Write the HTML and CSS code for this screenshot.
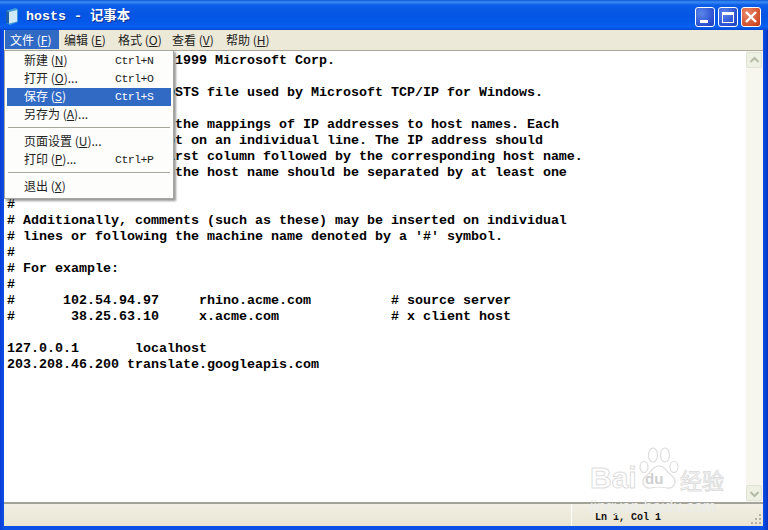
FILE: index.html
```html
<!DOCTYPE html>
<html lang="zh">
<head>
<meta charset="utf-8">
<title>hosts - 记事本</title>
<link rel="stylesheet" href="styles.css">
</head>
<body>
<div class="window">
  <header class="titlebar">
    <svg class="app-icon" width="13" height="17" viewBox="0 0 13 17">
      <path d="M0 3 L9 0 L12 1 L12 14 L4 17 L0 15 Z" fill="#3f9ad8"/>
      <path d="M3 4 L11 2 L11 13.5 L3 15.5 Z" fill="#cfe9f9"/>
      <path d="M0 3 L3 4 L3 15.5 L0 15 Z" fill="#1c5fa8"/>
    </svg>
    <span class="title">hosts - 记事本</span>
    <div class="controls">
      <button class="ctl ctl-blue"><svg width="20" height="20" viewBox="0 0 20 20"><rect x="5" y="13" width="8" height="3" fill="#fff"/></svg></button>
      <button class="ctl ctl-blue"><svg width="20" height="20" viewBox="0 0 20 20"><rect x="4.5" y="5.5" width="11" height="10" fill="none" stroke="#fff"/><rect x="4" y="5" width="12" height="3" fill="#fff"/></svg></button>
      <button class="ctl ctl-red"><svg width="20" height="20" viewBox="0 0 20 20"><path d="M5 5 L15 15 M15 5 L5 15" stroke="#fff" stroke-width="2.4"/></svg></button>
    </div>
  </header>
  <nav class="menubar">
    <span class="menu-item active">文件 (<u>F</u>)</span>
    <span class="menu-item">编辑 (<u>E</u>)</span>
    <span class="menu-item">格式 (<u>O</u>)</span>
    <span class="menu-item">查看 (<u>V</u>)</span>
    <span class="menu-item">帮助 (<u>H</u>)</span>
  </nav>
  <main class="editor">
    <pre class="text"># Copyright (c) 1993-1999 Microsoft Corp.
#
# This is a sample HOSTS file used by Microsoft TCP/IP for Windows.
#
# This file contains the mappings of IP addresses to host names. Each
# entry should be kept on an individual line. The IP address should
# be placed in the first column followed by the corresponding host name.
# The IP address and the host name should be separated by at least one
# space.
#
# Additionally, comments (such as these) may be inserted on individual
# lines or following the machine name denoted by a '#' symbol.
#
# For example:
#
#      102.54.94.97     rhino.acme.com          # source server
#       38.25.63.10     x.acme.com              # x client host

127.0.0.1       localhost
203.208.46.200 translate.googleapis.com</pre>
    <div class="scrollbar">
      <div class="sb-btn"><svg width="15" height="15" viewBox="0 0 15 15"><path d="M3.5 9 L7.5 5 L11.5 9" fill="none" stroke="#b4bca8" stroke-width="2"/></svg></div>
      <div class="sb-btn"><svg width="15" height="15" viewBox="0 0 15 15"><path d="M3.5 6 L7.5 10 L11.5 6" fill="none" stroke="#b4bca8" stroke-width="2"/></svg></div>
    </div>
  </main>
  <footer class="statusbar">
    <div class="status-main"></div>
    <div class="status-pos">Ln 1, Col 1</div>
    <svg class="grip" width="12" height="12" viewBox="0 0 12 12">
      <g fill="#b5b29f"><rect x="9" y="1" width="2" height="2"/><rect x="5" y="5" width="2" height="2"/><rect x="9" y="5" width="2" height="2"/><rect x="1" y="9" width="2" height="2"/><rect x="5" y="9" width="2" height="2"/><rect x="9" y="9" width="2" height="2"/></g>
    </svg>
  </footer>
</div>

<div class="dropdown">
  <div class="dd-row"><span class="dd-label">新建 (<u>N</u>)</span><span class="dd-key">Ctrl+N</span></div>
  <div class="dd-row"><span class="dd-label">打开 (<u>O</u>)...</span><span class="dd-key">Ctrl+O</span></div>
  <div class="dd-row selected"><span class="dd-label">保存 (<u>S</u>)</span><span class="dd-key">Ctrl+S</span></div>
  <div class="dd-row"><span class="dd-label">另存为 (<u>A</u>)...</span></div>
  <div class="dd-sep"></div>
  <div class="dd-row"><span class="dd-label">页面设置 (<u>U</u>)...</span></div>
  <div class="dd-row"><span class="dd-label">打印 (<u>P</u>)...</span><span class="dd-key">Ctrl+P</span></div>
  <div class="dd-sep"></div>
  <div class="dd-row"><span class="dd-label">退出 (<u>X</u>)</span></div>
</div>

<div class="watermark">
  <div class="wm-logo">
    <span class="wm-bai">Bai</span>
    <svg class="wm-paw" width="42" height="44" viewBox="0 0 42 44">
      <g fill="#fff" stroke="#dcdcdc" stroke-width="1.2">
        <ellipse cx="6" cy="20" rx="4" ry="5.5"/>
        <ellipse cx="15" cy="8" rx="4.5" ry="7"/>
        <ellipse cx="27" cy="8" rx="4.5" ry="7"/>
        <ellipse cx="36" cy="20" rx="4" ry="5.5"/>
        <path d="M21 19 C28 19 28 25 34 29 C40 34 36 42 29 41 C25 40 17 40 13 41 C6 42 2 34 8 29 C14 25 14 19 21 19 Z"/>
      </g>
    </svg>
    <span class="wm-du">du</span>
    <span class="wm-jy">经验</span>
  </div>
  <div class="wm-url">jingyan.baidu.com</div>
</div>
</body>
</html>
```

FILE: styles.css
```css
* { box-sizing: border-box; }
html, body { margin: 0; padding: 0; }
body {
  width: 768px;
  height: 530px;
  overflow: hidden;
  position: relative;
  background: #0a3fd0;
  font-family: "Noto Sans CJK SC", "Liberation Sans", sans-serif;
}
.window {
  width: 768px;
  height: 530px;
  display: flex;
  flex-direction: column;
  padding: 0 5px 4px 4px;
  background: linear-gradient(90deg, #0a3ed6 0, #0a4fe6 4px, #0a4fe6 763px, #0536c2 768px);
}
.titlebar {
  height: 30px;
  flex: none;
  margin: 0 -5px 0 -4px;
  padding: 3px 7px 0 6px;
  display: flex;
  align-items: center;
  background: linear-gradient(180deg, #0a56d8 0, #3c8cf4 2px, #0a5ee8 5px, #0455e4 14px, #0458e8 22px, #0860f2 27px, #0448d0 30px);
}
.app-icon { flex: none; margin-right: 7px; }
.title {
  font: bold 13.33px/16px "Liberation Mono", "Noto Sans CJK SC", monospace;
  color: #fff;
  text-shadow: 1px 1px 0 #0a2f90;
}
.controls { margin-left: auto; display: flex; gap: 3px; }
.ctl {
  width: 20px;
  height: 20px;
  padding: 0;
  border: 1px solid #fff;
  border-radius: 3px;
  display: block;
  overflow: hidden;
}
.ctl svg { display: block; margin: -1px; }
.ctl-blue { background: radial-gradient(circle at 30% 30%, #5d86ea, #2a4fd0 70%, #1c3cb0); }
.ctl-red { background: radial-gradient(circle at 30% 30%, #e88a6c, #d4502c 70%, #b8381c); }
.menubar {
  height: 21px;
  flex: none;
  padding: 0 1px 1px;
  display: flex;
  background: #ece9d8;
  border-bottom: 1px solid #aca899;
}
.menu-item {
  width: 54px;
  height: 19px;
  padding-left: 5px;
  font-size: 12px;
  line-height: 19px;
  color: #222;
  white-space: nowrap;
}
.menu-item.active { background: #316ac5; color: #fff; }
.editor {
  flex: 1;
  min-height: 0;
  display: flex;
  background: #fff;
  border-bottom: 2px solid #a3a39a;
}
.text {
  flex: 1;
  margin: 0;
  padding: 2px 0 0 3px;
  font: bold 13.33px/16px "Liberation Mono", monospace;
  color: #000;
  overflow: hidden;
}
.scrollbar {
  flex: none;
  width: 17px;
  padding: 1px 1px 1px 0;
  display: flex;
  flex-direction: column;
  justify-content: space-between;
  background: #f6f5ee;
}
.sb-btn {
  width: 16px;
  height: 16px;
  background: #eef0e4;
  border: 1px solid #dfe3d4;
  border-radius: 2px;
}
.sb-btn svg { display: block; }
.statusbar {
  height: 22px;
  flex: none;
  display: flex;
  background: linear-gradient(180deg, #f2f0e4, #e8e5d4);
}
.status-main { width: 568px; border-right: 1px solid #fff; }
.status-pos {
  flex: 1;
  padding: 6px 0 0 23px;
  font: bold 10px/15px "Liberation Mono", monospace;
  color: #111;
}
.grip { align-self: flex-end; margin: 0 1px 1px 0; }
.dropdown {
  position: absolute;
  left: 4px;
  top: 50px;
  width: 170px;
  height: 149px;
  padding: 1px 2px;
  background: #fdfdfb;
  border: 1px solid #a8a8a0;
  box-shadow: 2px 2px 2px rgba(70, 70, 70, .55);
}
.dd-row {
  height: 18px;
  display: flex;
  align-items: center;
  font-size: 12px;
  color: #222;
  padding-left: 17px;
}
.dd-row.selected { background: #316ac5; color: #fff; }
.dd-label { width: 91px; line-height: 16px; padding-bottom: 2px; white-space: nowrap; }
.dd-key { font: 11.5px/18px "Liberation Mono", monospace; letter-spacing: -.5px; }
.dd-sep {
  height: 2px;
  margin: 3px 1px 4px;
  background: #a8a69a;
  border-bottom: 1px solid #fff;
}
.watermark {
  position: absolute;
  left: 590px;
  top: 447px;
  width: 138px;
  pointer-events: none;
}
.wm-logo { height: 44px; display: flex; align-items: flex-end; position: relative; }
.wm-bai {
  font: bold 30px/27px "Liberation Sans", sans-serif;
  color: #fff;
  -webkit-text-stroke: 1px #dedede;
  width: 48px;
}
.wm-paw { flex: none; }
.wm-du {
  position: absolute;
  left: 55px;
  top: 24px;
  font: bold 15px/16px "Liberation Sans", sans-serif;
  color: #cfcfcf;
}
.wm-jy {
  font: 22px/24px "Noto Sans CJK SC", sans-serif;
  color: #fff;
  -webkit-text-stroke: 1px #dedede;
  white-space: nowrap;
}
.wm-url {
  margin-top: 8px;
  font: 15.6px/16px "Liberation Sans", sans-serif;
  color: #ececec;
  white-space: nowrap;
}
```
